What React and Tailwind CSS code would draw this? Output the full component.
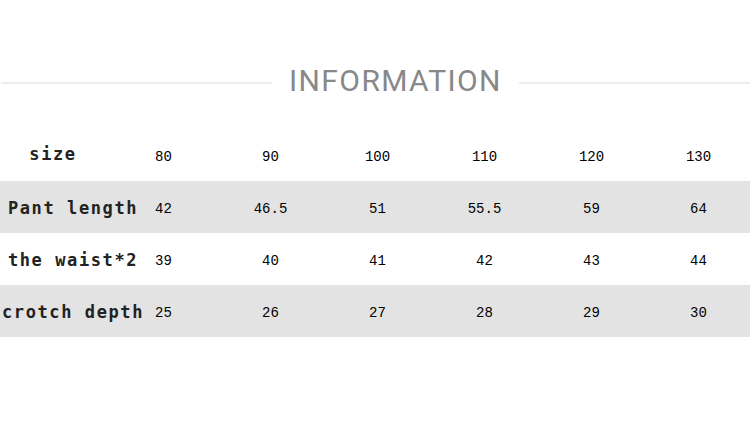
import React from 'react';

const sizes = ['80', '90', '100', '110', '120', '130'];

const rows = [
  { label: 'Pant length', values: ['42', '46.5', '51', '55.5', '59', '64'], shade: true },
  { label: 'the waist*2', values: ['39', '40', '41', '42', '43', '44'], shade: false },
  { label: 'crotch depth', values: ['25', '26', '27', '28', '29', '30'], shade: true },
];

const Row = ({ label, values, shade, labelClass = '' }) => (
  <div className={`flex h-[52px] items-center pt-[4px] ${shade ? 'bg-[#e3e3e3]' : 'bg-white'}`}>
    <div
      className={`w-[146px] shrink-0 whitespace-nowrap text-center text-[17px] font-bold tracking-[1.6px] text-[#222] ${labelClass}`}
      style={{ fontFamily: '"DejaVu Sans Mono", "Liberation Mono", monospace' }}
    >
      {label}
    </div>
    <div className="-ml-[36px] flex">
      {values.map((v, i) => (
        <div
          key={i}
          className="w-[107px] text-center text-[14px] text-black"
          style={{ fontFamily: '"Liberation Mono", monospace' }}
        >
          {v}
        </div>
      ))}
    </div>
  </div>
);

export default function App() {
  return (
    <div className="h-[424px] w-[750px] overflow-hidden bg-white">
      {/* Heading */}
      <div className="flex items-center pt-[66px]">
        <div className="ml-[1px] mt-[3px] h-[2px] w-[271px] bg-[#ededed]" />
        <h2
          className="px-[17px] text-[30px] leading-[30px] tracking-[1.4px] text-[#888888]"
          style={{ fontFamily: 'Roboto, "Liberation Sans", sans-serif' }}
        >
          INFORMATION
        </h2>
        <div className="mt-[3px] h-[2px] flex-1 bg-[#ededed]" />
      </div>

      {/* Size table */}
      <div className="mt-[33px]">
        <Row label="size" values={sizes} shade={false} labelClass="pr-[40px] -translate-y-[2px]" />
        {rows.map((r) => (
          <Row key={r.label} {...r} />
        ))}
      </div>
    </div>
  );
}
